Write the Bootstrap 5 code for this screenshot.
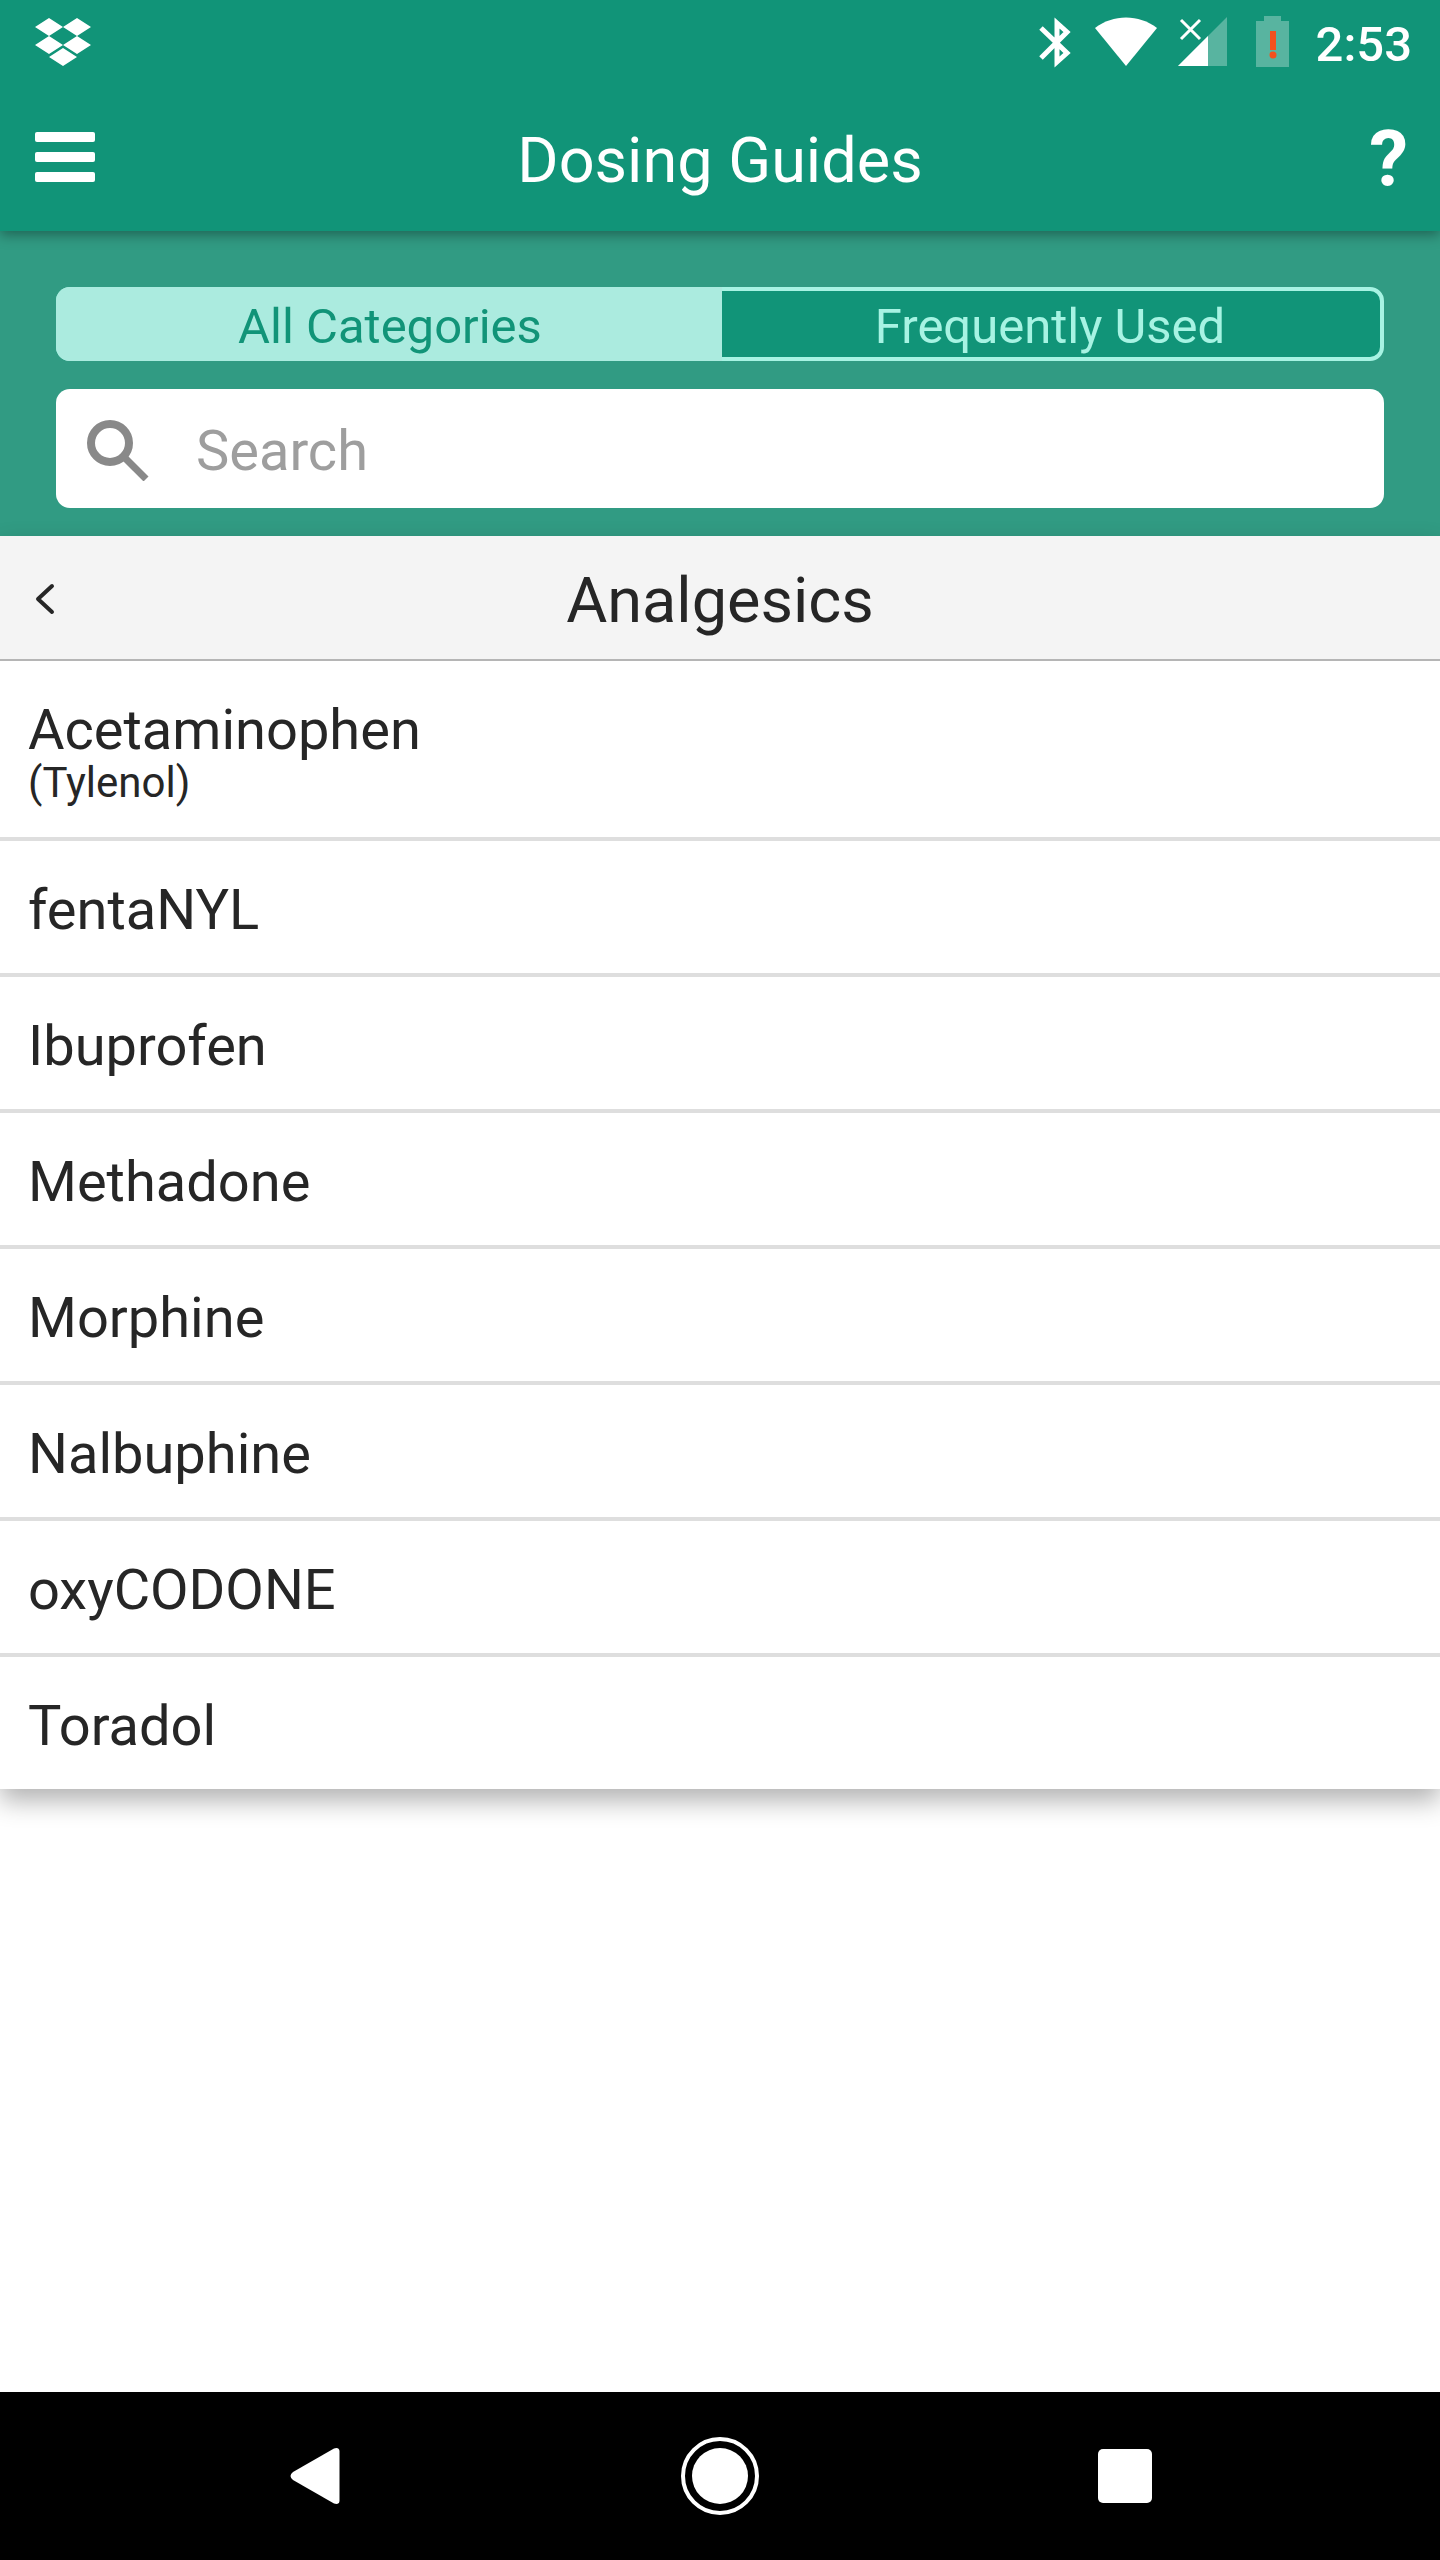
<!DOCTYPE html>
<html lang="en">
<head>
<meta charset="utf-8">
<meta name="viewport" content="width=device-width, initial-scale=1">
<title>Dosing Guides</title>
<link href="https://cdn.jsdelivr.net/npm/bootstrap@5.3.0/dist/css/bootstrap.min.css" rel="stylesheet">
<style>
  :root { --brand: #119478; --brand-soft: #319b83; --mint: #abebdf; --mint-line: #a7f3e3; --ink: #262626; }
  body { font-family: Roboto, "Noto Sans", sans-serif; color: var(--ink); }
  svg { display: block; flex: none; }
  .brand-bg { background: var(--brand); }
  .status-bar { height: 84px; padding: 16px 28px 0 34px; z-index: 3; }
  .status-icons { gap: 20px; }
  .clock { font-size: 49px; line-height: 58px; font-weight: 500; margin-left: 6px; }
  .app-header { height: 147px; padding: 0 32px; box-shadow: 0 4px 12px rgba(0, 0, 0, .35); z-index: 2; }
  .header-side { width: 64px; height: 100px; }
  .screen-title { font-size: 63px; line-height: 74px; padding-top: 6px; }
  .help-btn { font-size: 78px; line-height: 92px; padding-top: 4px; }
  .filter-panel { background: var(--brand-soft); padding: 56px 56px 28px; gap: 28px; }
  .segmented { height: 74px; border: 4px solid var(--mint-line); border-radius: 14px; background: var(--brand); }
  .segment { flex: 1 1 0; border-radius: 0; font-size: 49px; line-height: 58px; padding: 5px 0 0; color: var(--mint-line); }
  .segment.active, .segment.active:hover { background: var(--mint); color: var(--brand); border-radius: 10px 0 0 10px; box-shadow: 0 0 0 4px var(--mint); clip-path: inset(-4px -2px -4px -4px); }
  .search-box { height: 119px; border-radius: 14px; padding: 0 30px; gap: 46px; }
  .search-input { font-size: 56px; line-height: 66px; padding: 4px 0 0; color: var(--ink); }
  .search-input::placeholder { color: #9e9e9e; opacity: 1; }
  .guide-panel { box-shadow: 0 12px 24px rgba(0, 0, 0, .3); }
  .category-bar { height: 125px; padding: 0 28px; background: #f4f4f4; border-bottom: 2px solid #b5b5b5; }
  .drug-list .drug-row { padding: 36px 28px 30px; border: 0; border-bottom: 4px solid #dedede; color: var(--ink); font-size: 56px; line-height: 66px; }
  .drug-list .drug-row:last-child { border-bottom: 0; }
  .brand-name { font-size: 42px; line-height: 40px; padding-bottom: 4px; }
  .system-nav { height: 168px; padding: 0 112px; }
  .system-nav .btn { flex: 1 1 0; }
</style>
<script src="https://cdn.jsdelivr.net/npm/bootstrap@5.3.0/dist/js/bootstrap.bundle.min.js"></script>
</head>
<body class="d-flex flex-column min-vh-100 bg-white">
<div class="status-bar brand-bg text-white d-flex align-items-start justify-content-between position-relative">
  <svg width="58" height="52" viewBox="0 0 58 52" fill="#fff" role="img" aria-label="Dropbox"><path d="M1 11 15 2l14 9-14 9zM29 11l14-9 14 9-14 9zM1 29l14-9 14 9-14 9zM29 29l14-9 14 9-14 9zM15 41l14-9 14 9-14 9z"/></svg>
  <div class="status-icons d-flex align-items-start">
    <svg width="36" height="52" viewBox="0 0 36 52" fill="none" stroke="#fff" stroke-width="5" role="img" aria-label="Bluetooth"><path d="M3 12 29 37 19 46V7L29 16 3 42"/></svg>
    <svg width="64" height="52" viewBox="0 0 64 52" fill="#fff" role="img" aria-label="Wi-Fi"><path d="M1 12C19-2 45-2 63 12L32 50z"/></svg>
    <svg width="50" height="52" viewBox="0 0 50 52" role="img" aria-label="No mobile signal"><path d="M0 50 49 1v49z" fill="#fff" opacity=".3"/><path d="M0 50 30 20v30z" fill="#fff"/><path d="M3 4 22 23M22 4 3 23" stroke="#fff" stroke-width="3"/></svg>
    <svg class="ms-2" width="34" height="52" viewBox="0 0 34 52" role="img" aria-label="Battery low"><path d="M0 5h8V0h17v5h8v46H0z" fill="#fff" opacity=".3"/><path d="M14 15h6v19h-6z" fill="#f4511e"/><circle cx="17" cy="39" r="3.500" fill="#f4511e"/></svg>
    <span class="clock">2:53</span>
  </div>
</div>
<header class="app-header brand-bg text-white d-flex align-items-center justify-content-between position-relative">
  <button class="header-side btn border-0 p-0" type="button" aria-label="Menu"><svg width="64" height="52" viewBox="0 0 64 52" fill="#fff"><rect x="3" y="0" width="60" height="10" rx="2"/><rect x="3" y="20" width="60" height="10" rx="2"/><rect x="3" y="40" width="60" height="10" rx="2"/></svg></button>
  <h1 class="screen-title fw-normal mb-0">Dosing Guides</h1>
  <button class="header-side help-btn btn border-0 px-0 pb-0 text-white fw-bold text-end" type="button">?</button>
</header>
<main class="flex-grow-1">
  <section class="filter-panel d-flex flex-column">
    <div class="segmented d-flex" role="group" aria-label="Guide filter">
      <button class="segment btn border-0 active" type="button" aria-pressed="true">All Categories</button>
      <button class="segment btn border-0" type="button" aria-pressed="false">Frequently Used</button>
    </div>
    <label class="search-box bg-white d-flex align-items-center">
      <svg width="64" height="64" viewBox="0 0 64 64" fill="none" stroke="#898989" aria-hidden="true"><circle cx="24" cy="26" r="19" stroke-width="8"/><path d="M39 41 60 62" stroke-width="7"/></svg>
      <input class="search-input form-control border-0 shadow-none bg-transparent" type="text" placeholder="Search" aria-label="Search">
    </label>
  </section>
  <section class="guide-panel bg-white position-relative">
    <div class="category-bar d-flex align-items-center justify-content-between">
      <button class="header-side btn border-0 p-0" type="button" aria-label="Back"><svg width="36" height="36" viewBox="0 0 36 36" fill="none" stroke="#262626" stroke-width="4" stroke-linecap="round" stroke-linejoin="round"><path d="M24 6 10 19 24 32"/></svg></button>
      <h2 class="screen-title fw-normal mb-0">Analgesics</h2>
      <span class="header-side"></span>
    </div>
    <div class="drug-list list-group rounded-0">
      <a class="drug-row list-group-item" href="#">Acetaminophen<span class="brand-name d-block">(Tylenol)</span></a>
      <a class="drug-row list-group-item" href="#">fentaNYL</a>
      <a class="drug-row list-group-item" href="#">Ibuprofen</a>
      <a class="drug-row list-group-item" href="#">Methadone</a>
      <a class="drug-row list-group-item" href="#">Morphine</a>
      <a class="drug-row list-group-item" href="#">Nalbuphine</a>
      <a class="drug-row list-group-item" href="#">oxyCODONE</a>
      <a class="drug-row list-group-item rounded-0" href="#">Toradol</a>
    </div>
  </section>
</main>
<nav class="system-nav bg-black d-flex align-items-center" aria-label="System">
  <button class="btn border-0 p-0 d-flex justify-content-center" type="button" aria-label="Back"><svg width="50" height="58" viewBox="0 0 50 58" fill="#fff"><path d="M44 1.500Q49 0 49.500 4V54Q49 58 44 56.500L3 33Q-2 29 3 25z"/></svg></button>
  <button class="btn border-0 p-0 d-flex justify-content-center" type="button" aria-label="Home"><svg width="80" height="80" viewBox="0 0 80 80"><circle cx="40" cy="40" r="37" fill="none" stroke="#fff" stroke-width="4"/><circle cx="40" cy="40" r="28" fill="#fff"/></svg></button>
  <button class="btn border-0 p-0 d-flex justify-content-center" type="button" aria-label="Overview"><svg width="54" height="54" viewBox="0 0 54 54"><rect width="54" height="54" rx="5" fill="#fff"/></svg></button>
</nav>
</body>
</html>
